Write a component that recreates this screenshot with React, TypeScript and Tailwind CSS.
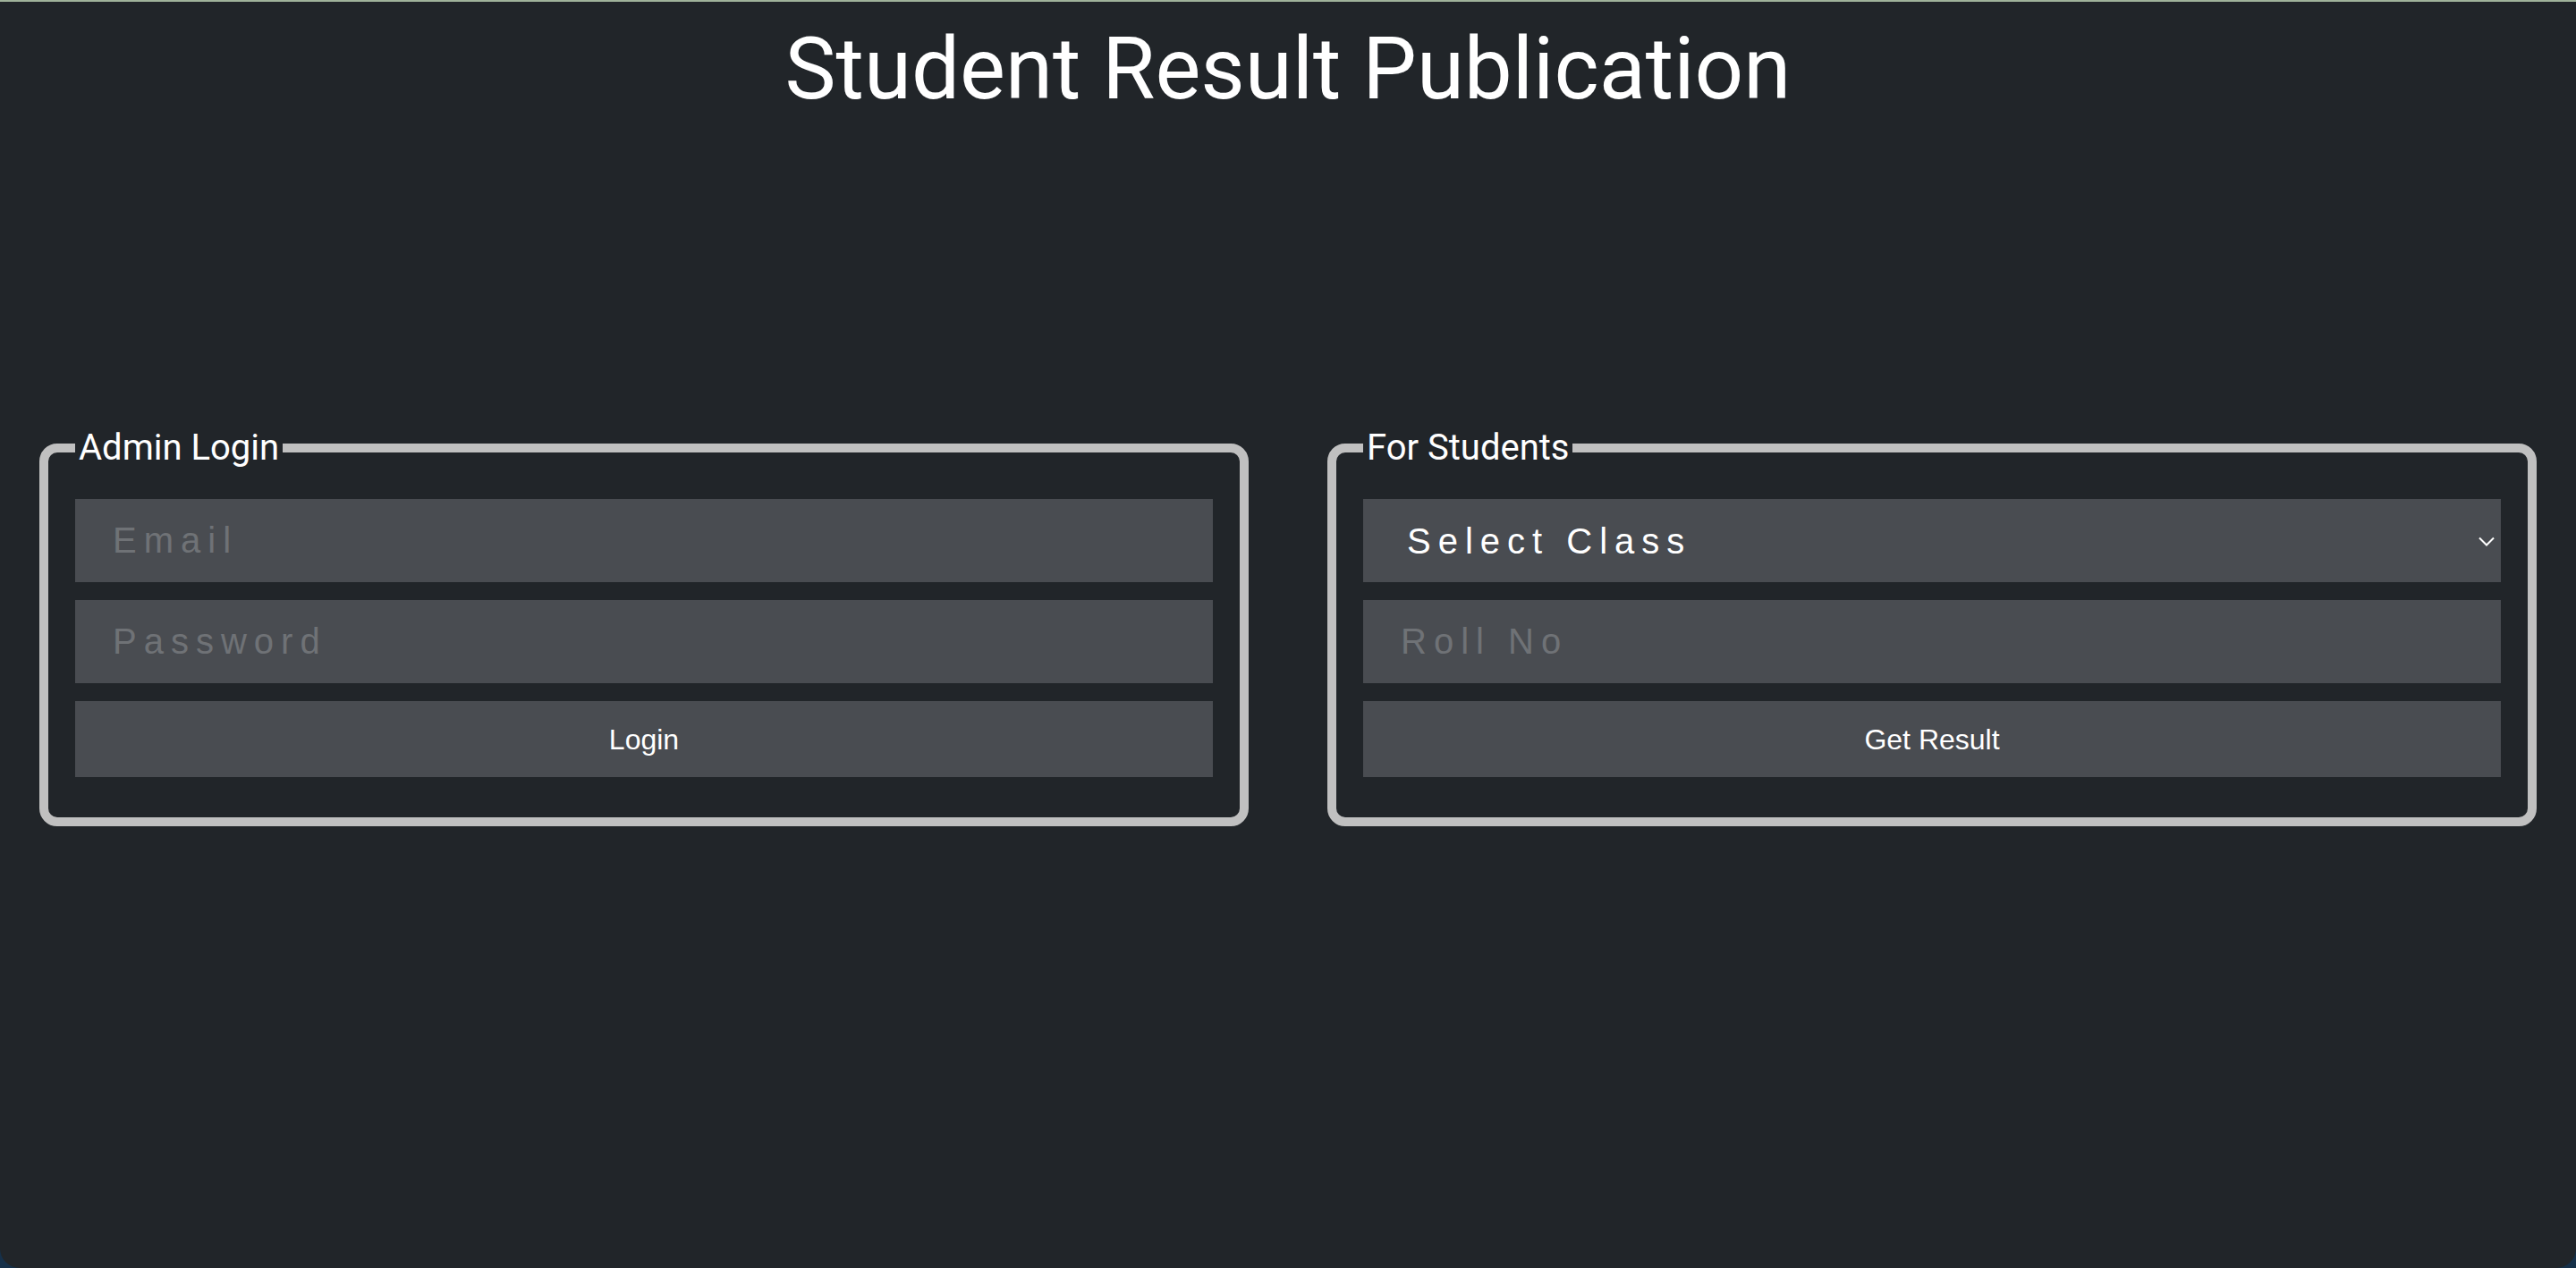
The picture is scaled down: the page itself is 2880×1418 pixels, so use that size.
import React, { FC } from "react";

const inputCls =
  "block w-full h-[93px] bg-[#494c51] px-[42px] text-[40px] tracking-[8px] text-white placeholder:text-[#6f7276] outline-none font-['Liberation_Sans',Arial,sans-serif]";

const btnCls =
  "block w-full h-[85px] bg-[#494c51] text-[32px] text-white font-['Liberation_Sans',Arial,sans-serif]";

const Panel: FC<{ title: string; children: React.ReactNode }> = ({ title, children }) => {
  return (
    <fieldset className="rounded-[20px] border-[10px] border-[#c0c0c0] px-[30px] pt-[37px] pb-[45px]">
      <legend className="px-[4px] text-[40px] leading-none text-white font-['Roboto',sans-serif]">
        {title}
      </legend>
      <div className="flex flex-col gap-[20px]">{children}</div>
    </fieldset>
  );
};

export default function App() {
  return (
    <div className="bg-[#163049]">
      <div className="min-h-[1418px] bg-[#212529] border-t-2 border-[#9fb29a] rounded-b-[22px]">
        <h1 className="pt-[27px] text-center text-[96px] leading-none text-white font-['Roboto',sans-serif]">
          Student Result Publication
        </h1>
        <div className="grid grid-cols-2 mt-[356px]">
          <div className="px-[44px]">
            <Panel title="Admin Login">
              <input className={inputCls} placeholder="Email" />
              <input className={inputCls} placeholder="Password" type="password" />
              <button className={btnCls}>Login</button>
            </Panel>
          </div>
          <div className="px-[44px]">
            <Panel title="For Students">
              <div className="relative">
                <select className={inputCls + " appearance-none pl-[49px]"} defaultValue="">
                  <option value="">Select Class</option>
                </select>
                <svg
                  className="absolute right-[7px] top-[42px] pointer-events-none"
                  width="18"
                  height="11"
                  viewBox="0 0 18 11"
                  fill="none"
                >
                  <path d="M1 1.5 L9 9.5 L17 1.5" stroke="#ffffff" strokeWidth="2" />
                </svg>
              </div>
              <input className={inputCls} placeholder="Roll No" />
              <button className={btnCls}>Get Result</button>
            </Panel>
          </div>
        </div>
      </div>
    </div>
  );
}
